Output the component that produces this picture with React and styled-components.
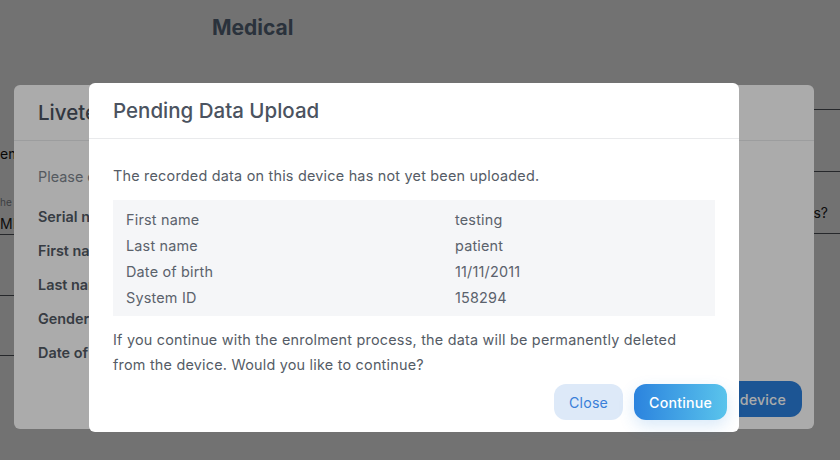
import styled, { createGlobalStyle } from "styled-components";

const GlobalStyle = createGlobalStyle`
  html, body {
    margin: 0;
    padding: 0;
    background: #ffffff;
    font-family: Inter, "Noto Sans", sans-serif;
  }
  * { box-sizing: border-box; }
`;

const patient = [
  { label: "First name", value: "testing" },
  { label: "Last name", value: "patient" },
  { label: "Date of birth", value: "11/11/2011" },
  { label: "System ID", value: "158294" },
];

export default function App() {
  return (
    <>
      <GlobalStyle />
      <Screen>
        <BackPage>
          <PageTitle>Medical</PageTitle>
          <BackGrid>
            <BackColumn>
              <BackIntro>embedded monitoring system</BackIntro>
              <Field>
                <FieldLabel>he device model</FieldLabel>
                <FieldValue>MDX-200</FieldValue>
              </Field>
              <BackRow />
              <BackRow />
            </BackColumn>
            <BackColumn>
              <QuestionRow />
              <QuestionRow />
              <QuestionRow>Has the patient any known allergies?</QuestionRow>
            </BackColumn>
          </BackGrid>
        </BackPage>

        <Overlay>
          <Dialog $width={800} $height={344} $top={85}>
            <DialogHeader>
              <DialogTitle>Livetec device enrolment</DialogTitle>
            </DialogHeader>
            <EnrolBody>
              <EnrolText>Please confirm the details below before enrolling.</EnrolText>
              <EnrolRow>Serial number</EnrolRow>
              <EnrolRow>First name</EnrolRow>
              <EnrolRow>Last name</EnrolRow>
              <EnrolRow>Gender</EnrolRow>
              <EnrolRow>Date of birth</EnrolRow>
            </EnrolBody>
            <Footer>
              <EnrolButton>Enrol device</EnrolButton>
            </Footer>
          </Dialog>
        </Overlay>

        <Overlay>
          <Dialog $width={650} $top={83}>
            <DialogHeader>
              <DialogTitle>Pending Data Upload</DialogTitle>
            </DialogHeader>
            <Body>
              <Text>The recorded data on this device has not yet been uploaded.</Text>
              <DataTable>
                {patient.map((p) => (
                  <DataRow key={p.label}>
                    <span>{p.label}</span>
                    <span>{p.value}</span>
                  </DataRow>
                ))}
              </DataTable>
              <Warning>
                If you continue with the enrolment process, the data will be permanently deleted
                from the device. Would you like to continue?
              </Warning>
            </Body>
            <Footer>
              <CloseButton>Close</CloseButton>
              <ContinueButton>Continue</ContinueButton>
            </Footer>
          </Dialog>
        </Overlay>
      </Screen>
    </>
  );
}

const Screen = styled.div`
  position: relative;
  width: 840px;
  height: 460px;
  overflow: hidden;
`;

const BackPage = styled.div`
  display: flex;
  flex-direction: column;
`;

const PageTitle = styled.h1`
  margin: 16px 0 0 212px;
  font-size: 21px;
  line-height: 24px;
  font-weight: 700;
  color: #5f7186;
`;

const BackGrid = styled.div`
  display: grid;
  grid-template-columns: 360px 1fr;
  gap: 80px;
`;

const BackColumn = styled.div`
  display: flex;
  flex-direction: column;
`;

const BackIntro = styled.div`
  margin-top: 106px;
  font-size: 14px;
  line-height: 16px;
  color: #111111;
  white-space: nowrap;
`;

const Field = styled.div`
  margin-top: 34px;
  display: flex;
  flex-direction: column;
  border-bottom: 1px solid #555b62;
  padding-bottom: 2px;
`;

const FieldLabel = styled.div`
  font-size: 10px;
  line-height: 12px;
  color: #8a8f96;
`;

const FieldValue = styled.div`
  margin-top: 8px;
  font-size: 14px;
  line-height: 16px;
  color: #222222;
`;

const BackRow = styled.div`
  height: 61px;
  border-bottom: 1px solid #555b62;
  &:last-child {
    height: 60px;
  }
`;

const QuestionRow = styled.div`
  height: 62px;
  display: flex;
  align-items: flex-end;
  justify-content: flex-end;
  padding: 0 12px 12px 0;
  border-bottom: 1px solid #555b62;
  font-size: 14px;
  line-height: 17px;
  color: #222222;
  &:first-child {
    margin-top: 8px;
  }
`;

const Overlay = styled.div`
  position: absolute;
  inset: 0;
  background: rgba(0, 0, 0, 0.33);
  display: flex;
  justify-content: center;
  align-items: flex-start;
  padding-right: 12px;
`;

const Dialog = styled.div`
  margin-top: ${(p) => p.$top}px;
  width: ${(p) => p.$width}px;
  ${(p) => (p.$height ? `height: ${p.$height}px;` : "")}
  background: #ffffff;
  border-radius: 6px;
  display: flex;
  flex-direction: column;
`;

const DialogHeader = styled.div`
  height: 56px;
  display: flex;
  align-items: center;
  padding: 0 24px;
  border-bottom: 1px solid #e9eaec;
`;

const DialogTitle = styled.h2`
  margin: 0;
  font-size: 20.5px;
  font-weight: 500;
  color: #4b5360;
  white-space: nowrap;
`;

const Body = styled.div`
  padding: 25px 24px 0;
  display: flex;
  flex-direction: column;
`;

const Text = styled.p`
  margin: 0;
  font-size: 14.4px;
  line-height: 24px;
  letter-spacing: 0.22px;
  color: #555c66;
`;

const DataTable = styled.div`
  margin-top: 12px;
  background: #f5f6f8;
  padding: 6px 13px;
  display: flex;
  flex-direction: column;
`;

const DataRow = styled.div`
  display: grid;
  grid-template-columns: 329px 1fr;
  height: 26px;
  align-items: center;
  font-size: 14.4px;
  letter-spacing: 0.2px;
  color: #5b626c;
`;

const Warning = styled(Text)`
  margin-top: 11px;
  padding-right: 12px;
  line-height: 25px;
`;

const Footer = styled.div`
  margin-top: auto;
  display: flex;
  justify-content: flex-end;
  gap: 11px;
  padding: 7px 12px 12px;
`;

const Button = styled.button`
  height: 36px;
  padding: 0 15px;
  border: none;
  border-radius: 12px;
  font-family: inherit;
  font-size: 14.2px;
  letter-spacing: 0.2px;
  cursor: pointer;
`;

const CloseButton = styled(Button)`
  background: #dde9f8;
  color: #3a7fd8;
`;

const ContinueButton = styled(Button)`
  background: linear-gradient(90deg, #2b83de 0%, #5ac4ec 100%);
  color: #ffffff;
  font-weight: 500;
  box-shadow: 0 6px 16px rgba(43, 131, 222, 0.18);
`;

const EnrolButton = styled(Button)`
  padding: 0 16px;
  background: #2b7fdd;
  color: #ffffff;
  font-weight: 500;
`;

const EnrolBody = styled.div`
  padding: 24px 24px 0;
  display: flex;
  flex-direction: column;
`;

const EnrolText = styled.p`
  margin: 0 0 10px;
  font-size: 14.4px;
  line-height: 24px;
  color: #7f8790;
  white-space: nowrap;
`;

const EnrolRow = styled.div`
  height: 34px;
  display: flex;
  align-items: center;
  font-size: 14.4px;
  font-weight: 600;
  color: #525a65;
`;
